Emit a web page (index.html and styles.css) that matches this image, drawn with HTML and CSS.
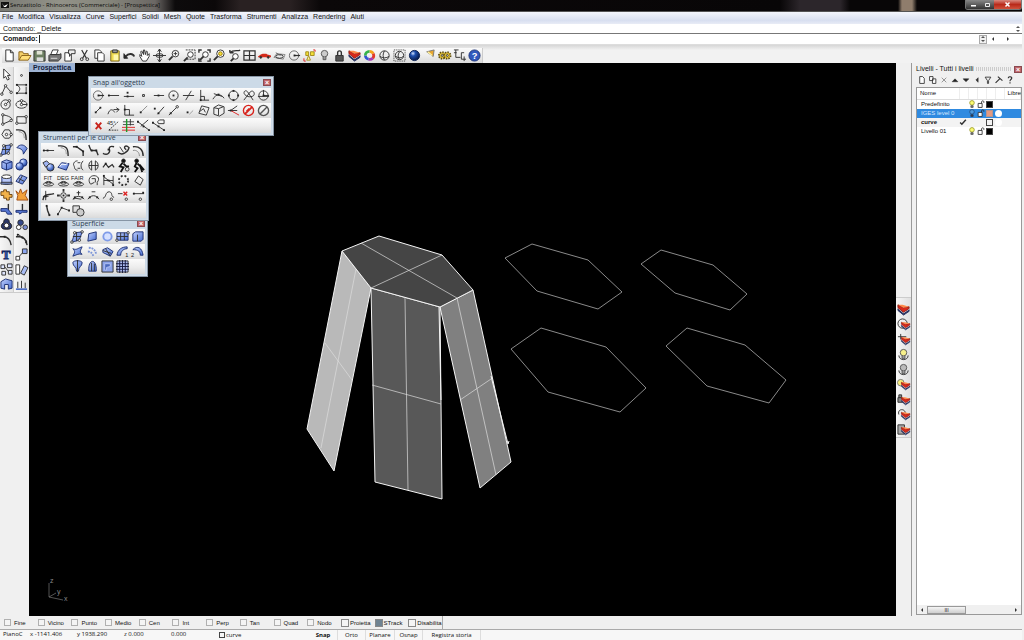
FILE: index.html
```
<!DOCTYPE html>
<html lang="it">
<head>
    <meta charset="UTF-8">
    <meta name="viewport" content="width=device-width, initial-scale=1.0">
    <title>Senzatitolo - Rhinoceros (Commerciale) - [Prospettica]</title>
    <link rel="stylesheet" href="styles.css">
</head>
<body>
    <svg class="defs" width="0" height="0" aria-hidden="true">
        <defs>
            <radialGradient id="blueBall" cx="35%" cy="30%" r="70%">
                <stop offset="0" stop-color="#dfe8ff"/><stop offset="0.5" stop-color="#6f8fe0"/><stop offset="1" stop-color="#24479f"/>
            </radialGradient>
            <radialGradient id="darkBall" cx="35%" cy="30%" r="70%">
                <stop offset="0" stop-color="#cfe0ff"/><stop offset="0.35" stop-color="#1d4fae"/><stop offset="1" stop-color="#061a4c"/>
            </radialGradient>
            <linearGradient id="blueFace" x1="0" y1="0" x2="1" y2="1">
                <stop offset="0" stop-color="#c4d3ff"/><stop offset="1" stop-color="#456bd0"/>
            </linearGradient>
        </defs>
    </svg>

    <header class="titlebar">
        <svg class="logo" viewBox="0 0 8 8"><path d="M0 1h8v6H0z" fill="#111"/><path d="M1 2l2 3 4-2-2 3H3z" fill="#fff"/></svg>
        <h1>Senzatitolo - Rhinoceros (Commerciale) - [Prospettica]</h1>
        <div class="window-buttons">
            <button aria-label="Riduci"><svg viewBox="0 0 9 7"><path d="M2 4h5v1.500H2z" fill="#fff"/></svg></button>
            <button aria-label="Ripristina"><svg viewBox="0 0 9 7"><path d="M2.500 2.500h4v3h-4z" fill="none" stroke="#eee"/></svg></button>
            <button class="close" aria-label="Chiudi"><svg viewBox="0 0 9 7"><path d="M2.500 1.500l4 4M6.500 1.500l-4 4" stroke="#fff" stroke-width="1.500"/></svg></button>
        </div>
    </header>

    <nav class="menu">
        <a href="#">File</a>
        <a href="#">Modifica</a>
        <a href="#">Visualizza</a>
        <a href="#">Curve</a>
        <a href="#">Superfici</a>
        <a href="#">Solidi</a>
        <a href="#">Mesh</a>
        <a href="#">Quote</a>
        <a href="#">Trasforma</a>
        <a href="#">Strumenti</a>
        <a href="#">Analizza</a>
        <a href="#">Rendering</a>
        <a href="#">Aiuti</a>
    </nav>

    <section class="command">
        <div class="history"><span>Comando: _Delete</span><span class="updown"></span></div>
        <div class="prompt">
            <label for="command">Comando:</label>
            <input type="text" id="command" autocomplete="off">
            <span class="updown boxed"></span>
            <span class="arrow left"></span>
            <span class="arrow right"></span>
        </div>
    </section>

    <div class="toolbar-row">
        <div class="tools main-tools" data-tools="new open save print props cut copy paste undo pan rotate zoom zoomWin zoomExt zoomSel undoView fourView car cplane osnapCircle selLight bulb lock layer wheel sphereWire sphereSel sphereBlue spot gears dims help"></div>
    </div>

    <main class="workspace">
        <aside class="left-tools">
            <div class="tools two-cols" data-tools="arrow point polyline curvePts circle ellipse arc rect polygon fillet srfPts srfArc box balls cylinder patch puzzle explode trim split union group curveEdit ptsEdit text move array orient boolBox align"></div>
        </aside>

        <section class="viewport">
            <h2>Prospettica</h2>
            <svg class="scene" viewBox="29 63 867 553" preserveAspectRatio="xMinYMin meet">
                <g class="solid">
                    <path d="M342 251L371 288L334 471L307 429z" fill="#b9b9b9"/>
                    <path d="M440 307L473 290L511 462L480 488z" fill="#808080"/>
                    <path d="M371 288L440 307L442 499L375 482z" fill="#585858"/>
                    <path d="M342 251L379 236L442 255L473 290L440 307L371 288z" fill="#454545"/>
                    <path d="M439 307L441 400M491 376L508 444L509 441"/>
                </g>
                <g class="iso">
                    <path d="M361 243L457 298L496 475M442 255L371 288"/>
                    <path d="M356 269L321 448M325 343L352 380"/>
                    <path d="M405 298L408 490M372 385L441 404"/>
                    <path d="M460 400L491 379"/>
                </g>
                <g class="outline">
                    <path d="M505 258L532 244L588 260L622 292L598 309L537 291z"/>
                    <path d="M641 264L661 250L713 265L747 294L730 310L675 293z"/>
                    <path d="M511 349L541 328L606 347L646 388L620 412L548 392z"/>
                    <path d="M666 346L687 328L745 345L786 380L769 403L707 386z"/>
                </g>
                <g class="axes">
                    <path d="M49 583V597L63 600M49 597L56 593"/>
                    <text x="50" y="583">z</text>
                    <text x="57" y="594">y</text>
                    <text x="64" y="601">x</text>
                </g>
            </svg>
        </section>

        <aside class="layer-tools">
            <div class="tools one-col" data-tools="layer layerLoop layerCurve bulbOn bulbOff layerBulb layerLock layerOpen layerCopy"></div>
        </aside>

        <aside class="layers">
            <div class="layers-title"><h2>Livelli - Tutti i livelli</h2><span class="grip"></span><button class="x" aria-label="Chiudi">×</button></div>
            <div class="tools small-tools" data-tools="pNew pCopy pDelete pUp pDown pLeft pFilter pHammer pHelp"></div>
            <div class="layer-list">
                <table>
                    <colgroup><col class="c-name"><col class="c-icon"><col class="c-icon"><col class="c-icon"><col class="c-icon"><col class="c-icon"><col></colgroup>
                    <thead>
                        <tr><th>Nome</th><th></th><th></th><th></th><th></th><th></th><th>Librer</th></tr>
                    </thead>
                    <tbody>
                        <tr><td>Predefinito</td><td></td><td data-icon="lamp"></td><td data-icon="padlock"></td><td><i class="swatch black"></i></td><td></td><td></td></tr>
                        <tr class="selected"><td>IGES level 0</td><td></td><td data-icon="lampDim"></td><td data-icon="padlock"></td><td><i class="swatch salmon"></i></td><td><i class="material"></i></td><td></td></tr>
                        <tr class="current"><td>curve</td><td data-icon="check"></td><td></td><td></td><td><i class="swatch"></i></td><td><i class="material"></i></td><td></td></tr>
                        <tr><td>Livello 01</td><td></td><td data-icon="lamp"></td><td data-icon="padlock"></td><td><i class="swatch black"></i></td><td></td><td></td></tr>
                    </tbody>
                </table>
                <div class="scrollbar"><span class="arrow left"></span><span class="thumb">III</span><span class="arrow right"></span></div>
            </div>
        </aside>

        <section class="palette surface">
            <div class="palette-title"><h2>Superficie</h2><button class="x" aria-label="Chiudi">×</button></div>
            <div class="tools" data-tools="srfPts srfPlane disc srfRect srfCyl loft drape network sweep1 sweep2 revolve rail heightfield srfGrid"></div>
        </section>
        <section class="palette curves">
            <div class="palette-title"><h2>Strumenti per le curve</h2><button class="x" aria-label="Chiudi">×</button></div>
            <div class="tools" data-tools="extend fillet chamfer connect blend loop offset project onSrf halves mirror wave runner runners fit deg fair head handle dotsRing diamond extract target archPlus archMinus bell removeKnot addKnot seam polyEdit boolCurve"></div>
        </section>
        <section class="palette snap">
            <div class="palette-title"><h2>Snap all'oggetto</h2><button class="x" aria-label="Chiudi">×</button></div>
            <div class="tools" data-tools="osnapCircle sEnd sNear sPoint sMid sCenter sInt sPerp sTan sQuad sKnot sVertex sFrom sAlong sBetween sLine sParallel sTanFrom sArc sOnSrf sOnMesh sSplit noRed noGrey sClear sAngle sGrid sCross sProject"></div>
        </section>
    </main>

    <form class="osnap">
        <label><input type="checkbox">Fine</label>
        <label><input type="checkbox">Vicino</label>
        <label><input type="checkbox">Punto</label>
        <label><input type="checkbox">Medio</label>
        <label><input type="checkbox">Cen</label>
        <label><input type="checkbox">Int</label>
        <label><input type="checkbox">Perp</label>
        <label><input type="checkbox">Tan</label>
        <label><input type="checkbox">Quad</label>
        <label><input type="checkbox">Nodo</label>
        <label class="big"><input type="checkbox">Proietta</label>
        <label class="big"><input type="checkbox" checked>STrack</label>
        <label class="big"><input type="checkbox">Disabilita</label>
    </form>

    <footer class="status">
        <span>PianoC</span>
        <span>x -1141.406</span>
        <span>y 1938.290</span>
        <span>z 0.000</span>
        <span>0.000</span>
        <span class="layer"><i class="swatch"></i>curve</span>
        <button class="on">Snap</button>
        <button>Orto</button>
        <button>Planare</button>
        <button>Osnap</button>
        <button>Registra storia</button>
    </footer>

    <script src="script.js"></script>
</body>
</html>
```
FILE: styles.css
```
* {
    box-sizing: border-box;
}
body {
    display: flex;
    flex-direction: column;
    height: 100vh;
    margin: 0;
    padding-right: 2px;
    overflow: hidden;
    font-family: "Open Sans", sans-serif;
    font-size: 6px;
    line-height: 10px;
    color: #111;
    background: #f0f0f0;
}
h1, h2 {
    margin: 0;
    font-size: inherit;
    font-weight: normal;
    white-space: nowrap;
}
button {
    padding: 0;
    border: none;
    background: none;
    font: inherit;
    color: inherit;
}
.defs {
    position: absolute;
}

/* Title bar */
.titlebar {
    display: flex;
    height: 12px;
    padding-left: 1px;
    background: linear-gradient(90deg, #7a7a74, #929288 60px, #84847a 110px, #6b6764 155px, #0d0b0c 175px, #0b0809 215px, #292122 240px, #292122 290px, #0b0809 320px, #080607 780px, #2c262b 800px, #2c262b 840px, #080607 850px, #080607 898px, #8f7d6c 902px, #8f7d6c 912px, #080607 917px);
    border-bottom: 1px solid #555;
}
.logo {
    width: 8px;
    height: 8px;
    margin: 1px 1px 0 0;
}
.titlebar h1 {
    flex: 1;
    color: #0c0c0c;
    line-height: 11px;
}
.window-buttons {
    display: flex;
    height: 10px;
    border: 1px solid #777;
    border-top: none;
    border-radius: 0 0 3px 3px;
    overflow: hidden;
}
.window-buttons button {
    display: flex;
    width: 14px;
    justify-content: center;
    background: linear-gradient(#888, #333);
}
.window-buttons svg {
    width: 9px;
    height: 7px;
    margin-top: 1px;
}
.window-buttons .close {
    width: 27px;
    background: linear-gradient(#d98a80, #b92a1a 50%, #d0523c);
}

/* Menu */
.menu {
    display: flex;
    gap: 5px;
    height: 12px;
    padding-left: 2px;
    font-family: "Liberation Sans", sans-serif;
    font-size: 7px;
    line-height: 10px;
    background: linear-gradient(#f4f6fc, #d8dff0 70%, #e8ecf6);
}
.menu a {
    color: #111;
    text-decoration: none;
}

/* Command line */
.command {
    font-family: "Liberation Sans", sans-serif;
    font-size: 7px;
    background: #fff;
    border-bottom: 1px solid #ddd;
}
.history, .prompt {
    display: flex;
    align-items: center;
    height: 10px;
    padding-left: 3px;
}
.history {
    justify-content: space-between;
    line-height: 9px;
    border-bottom: 1px solid #777;
}
.prompt label {
    font-weight: bold;
}
.prompt input {
    flex: 1;
    height: 8px;
    margin-left: 1px;
    padding: 0;
    border: none;
    border-left: 1px solid #222;
    outline: none;
    font: inherit;
}
.updown {
    display: flex;
    flex-direction: column;
    justify-content: center;
    gap: 2px;
    width: 8px;
    height: 9px;
    align-items: center;
}
.updown::before, .updown::after {
    content: "";
    border: 2px solid transparent;
    border-top: none;
    border-bottom-color: #555;
}
.updown::after {
    border-top: 2px solid #555;
    border-bottom: none;
}
.boxed {
    border: 1px solid #aaa;
    background: #f0f0f0;
}
.arrow {
    border: 2px solid transparent;
}
.arrow.left {
    border-right-color: #333;
    border-left: none;
}
.arrow.right {
    border-left-color: #333;
    border-right: none;
}
.prompt .arrow {
    margin-left: 5px;
}
.prompt .arrow.right {
    margin: 0 13px;
}

/* Tool buttons */
.tools {
    display: flex;
    flex-wrap: wrap;
}
.tools button {
    display: flex;
    align-items: center;
    justify-content: center;
    width: 15px;
    height: 15px;
}
.tools svg, td svg {
    display: block;
    width: 13px;
    height: 13px;
    overflow: visible;
    fill: none;
    stroke: #303030;
}
.tools svg text {
    font: 6px "Liberation Sans", sans-serif;
    fill: #222;
    stroke: none;
}
.tools .letter {
    font: bold 14px "Liberation Serif", serif;
    fill: #4468cc;
    stroke: #14265e;
    stroke-width: 1px;
}
.tools .mark {
    font: bold 10px "Liberation Sans", sans-serif;
    fill: #fff;
}
.toolbar-row {
    height: 18px;
    padding: 3px 0 0 2px;
    background: linear-gradient(#d6d6d6, #f2f2f2 5px);
}
.main-tools {
    width: max-content;
    flex-wrap: nowrap;
    border-right: 1px solid #ccc;
    background: linear-gradient(#fbfbfb, #ededed 50%, #dadada);
}

/* Workspace */
.workspace {
    position: relative;
    display: flex;
    flex: 1;
    min-height: 0;
}
.left-tools {
    width: 29px;
    padding-top: 4px;
    overflow: hidden;
}
.two-cols {
    width: 30px;
    margin-left: -1px;
    border-bottom: 1px solid #ccc;
    background: linear-gradient(90deg, #f8f8f8, #e2e2e2 14px, #f8f8f8 15px, #e2e2e2);
}
.two-cols button:nth-child(odd) {
    border-right: 1px solid #ccc;
}
.viewport {
    flex: 1;
    min-width: 0;
    overflow: hidden;
    background: #000;
}
.viewport h2 {
    width: max-content;
    padding: 0 4px;
    font: bold 7px/9px "Liberation Sans", sans-serif;
    color: #14223c;
    background: #9eb3d3;
}
.scene {
    display: block;
    width: 100%;
    margin-top: -9px;
}
.solid path {
    stroke: #f4f4f4;
}
.solid path:last-child {
    fill: none;
}
.iso path, .outline path {
    fill: none;
    stroke: #ddd;
    stroke-width: 0.7px;
}
.outline path {
    stroke: #c4c4c4;
}
.axes path {
    fill: none;
    stroke: #777;
    stroke-width: 0.7px;
}
.axes text {
    font: 7px "Liberation Sans", sans-serif;
    fill: #888;
}

/* Floating palettes lie over the viewport */
.palette {
    position: absolute;
    padding: 0 2px 2px;
    border: 1px solid #8795a5;
    background: #ccdae7;
    box-shadow: 0 0 1px #fff inset;
}
.palette-title {
    display: flex;
    align-items: center;
    justify-content: space-between;
    height: 11px;
    padding-left: 2px;
    color: #2c3c50;
    font-size: 7px;
}
.palette .tools {
    background: repeating-linear-gradient(#fbfbfb, #ededed 8px, #dadada 15px);
}
.snap {
    top: 13px;
    left: 88px;
    width: 186px;
}
.curves {
    top: 68px;
    left: 38px;
    width: 111px;
}
.surface {
    top: 154px;
    left: 67px;
    width: 81px;
}
.x {
    width: 8px;
    height: 7px;
    border: 1px solid #8b4a50;
    font: bold 7px/5px "Liberation Sans", sans-serif;
    color: #fff;
    background: #c06468;
}

/* Layer toolbar and panel */
.layer-tools {
    width: 15px;
    padding-top: 234px;
}
.layer-tools .tools {
    padding-top: 4px;
    border-top: 1px solid #ccc;
    border-bottom: 1px solid #ccc;
    background: linear-gradient(90deg, #f8f8f8, #dedede);
}
.layers {
    display: flex;
    flex-direction: column;
    width: 111px;
    padding-left: 4px;
    border-left: 1px solid #999;
    font-family: "Liberation Sans", sans-serif;
}
.layers-title {
    display: flex;
    align-items: center;
    gap: 2px;
    height: 11px;
    padding-top: 1px;
    font-size: 7px;
}
.grip {
    flex: 1;
    height: 4px;
    background: repeating-linear-gradient(90deg, #ccc 0 1px, transparent 1px 2px);
}
.small-tools {
    height: 13px;
}
.small-tools button {
    width: 11px;
    height: 11px;
}
.small-tools svg {
    width: 8px;
    height: 8px;
}
.layer-list {
    display: flex;
    flex: 1;
    flex-direction: column;
    justify-content: space-between;
    margin-bottom: 1px;
    border: 1px solid #999;
    background: #fff;
    overflow: hidden;
}
table {
    width: 100%;
    table-layout: fixed;
    border-collapse: collapse;
    line-height: 9px;
}
.c-name {
    width: 42px;
}
.c-icon {
    width: 9px;
}
th {
    height: 11px;
    padding: 0 0 0 3px;
    font-weight: normal;
    text-align: left;
    border-bottom: 1px solid #ddd;
    border-right: 1px solid #eee;
}
td {
    height: 9px;
    padding: 0;
    white-space: nowrap;
}
td:first-child {
    padding-left: 4px;
}
td svg {
    width: 8px;
    height: 8px;
}
.selected {
    color: #d8e8ff;
    background: #2f8ae0;
}
.current {
    font-weight: bold;
    background: #f3f3f3;
}
.swatch, .material {
    display: block;
    width: 7px;
    height: 7px;
    border: 1px solid #444;
}
.black {
    background: #000;
}
.salmon {
    border-color: #b7958c;
    background: #e59a80;
}
.material {
    border: none;
    border-radius: 50%;
    background: #fff;
}
.scrollbar {
    display: flex;
    align-items: center;
    gap: 4px;
    height: 9px;
    padding: 0 4px;
    background: #f0f0f0;
}
.thumb {
    width: 39px;
    height: 8px;
    border: 1px solid #999;
    font-size: 5px;
    line-height: 6px;
    text-align: center;
    background: linear-gradient(#f5f5f5, #cfcfcf);
}
.scrollbar .arrow.right {
    margin-left: auto;
}

/* Object snaps */
.osnap {
    display: grid;
    grid-template-columns: repeat(13, minmax(0, 1fr));
    width: 443px;
    height: 13px;
    padding-left: 4px;
    border-right: 1px solid #aaa;
    font-family: "Liberation Sans", sans-serif;
}
.osnap label {
    display: flex;
    align-items: center;
    gap: 3px;
    white-space: nowrap;
}
.osnap input {
    appearance: none;
    flex: none;
    width: 7px;
    height: 7px;
    margin: 0;
    border: 1px solid #b0b0b0;
    background: #f4f4f4;
}
.osnap .big {
    gap: 1px;
}
.osnap .big input {
    width: 8px;
    height: 8px;
    border-color: #888;
}
.osnap .big input:checked {
    background: #6f8392;
}

/* Status bar */
.status {
    display: grid;
    grid-template-columns: 27px 47px 47px 47px 48px 90px 29px 28px 29px 28px 58px;
    height: 11px;
    padding-left: 3px;
    line-height: 9px;
    border-top: 1px solid #aaa;
    background: #f7f7f7;
}
.status .layer {
    display: flex;
    align-items: center;
    gap: 1px;
}
.status .swatch {
    width: 6px;
    height: 6px;
}
.status button {
    border-right: 1px solid #ddd;
    white-space: nowrap;
}
.status .on {
    font-weight: bold;
}
```
FILE: script.js
```
// Shared pieces
const dot = (x, y) => `<path d="M${x - 1} ${y - 1}h2v2h-2z" fill="#222" stroke="none"/>`;
const node = (x, y) => `<circle cx="${x}" cy="${y}" r="1.300" fill="#fff"/>`;
const line = (d) => `<path d="${d}"/>`;
const blue = (d) => `<path d="${d}" fill="url(#blueFace)" stroke="#1c2f70"/>`;
const ball = (x, y, r) => `<circle cx="${x}" cy="${y}" r="${r}" fill="url(#blueBall)" stroke="#1c2f70"/>`;
const redLayer = '<path d="M1 6l6 5 6-4v2l-6 4-6-5z" fill="#26305e" stroke="#26305e"/><path d="M1 5l6 5 6-4v1l-6 4-6-5z" fill="#fff" stroke="none"/><path d="M1 2l6 3 6-1v2l-6 4-6-5z" fill="#d8281a" stroke="#8a2018"/><path d="M1 2l5 0 7 2-6 1z" fill="#ff8a4a" stroke="none"/>';
const miniLayer = `<g transform="translate(4 3) scale(.75)">${redLayer}</g>`;
const lampShape = (c) => `<circle cx="7" cy="5" r="3.500" fill="${c}" stroke="#555"/><path d="M5.500 8.500v3h3v-3" fill="#999" stroke="#555"/>`;
const rings = '<ellipse cx="7" cy="11" rx="5.500" ry="2"/><ellipse cx="7" cy="9.500" rx="3" ry="1.500"/>';

const icons = {
    // standard toolbar
    new: '<path d="M3 1h5l3 3v9H3zM8 1v3h3" fill="#fff"/>',
    open: '<path d="M1 12V3h4l1 2h5v2" fill="#f3cf6a" stroke="#886018"/><path d="M1 12l3-5h10l-3 5z" fill="#ffdf7a" stroke="#886018"/>',
    save: '<path d="M1 2h12v11H1z" fill="#6d8062"/><path d="M4 2h6v4H4z" fill="#dfe3d4" stroke="none"/><path d="M4 9h7v4H4z" fill="#ddd" stroke="none"/>',
    print: '<path d="M5 1h6L9 6H3z" fill="#fff"/><path d="M2 6h10l2-1v5l-3 3H1V7z" fill="#777"/><path d="M3 10h7" stroke="#ddd"/>',
    props: '<path d="M2 4h7v9H2z" fill="#fff"/><path d="M6 1h7v4H9L7 8V5H6z" fill="#eee"/>',
    cut: '<path d="M4 1l5 9M10 1L5 10" stroke-width="1.300"/><circle cx="4" cy="11" r="1.500"/><circle cx="10" cy="11" r="1.500"/>',
    copy: '<path d="M2 1h5l2 2v7H2z" fill="#fff"/><path d="M5 4h5l2 2v7H5z" fill="#fff"/>',
    paste: '<path d="M3 2h9v11H3z" fill="#f1dc50" stroke="#77651a"/><path d="M5 1h5v3H5z" fill="#999"/><path d="M6 6h5v6H6z" fill="#fff8ae" stroke="none"/>',
    undo: '<path d="M3 8c3-4 8-3 9 0" stroke-width="2"/><path d="M1 5v5h4z" fill="#222"/>',
    pan: '<path d="M5 13L2 8V6l2 2-1-5 1-1 2 4V1h1l1 5 1-4 1 1v4l2-2v3l-3 5z" fill="#fff"/>',
    rotate: '<path d="M7 0v14M0 7h14M5 3l2-3 2 3M5 11l2 3 2-3"/><ellipse cx="7" cy="7" rx="4" ry="2" />',
    zoom: '<circle cx="8" cy="5" r="3.500" fill="#fff"/><path d="M5 8l-4 4" stroke-width="2"/><path d="M6 5h4M8 3v4"/>',
    zoomWin: '<path d="M3 1h10v10H3" stroke-dasharray="2 1"/><circle cx="8" cy="6" r="3" fill="#fff"/><path d="M5 9l-4 4" stroke-width="2"/>',
    zoomExt: '<path d="M1 4V1h3M10 1h3v3M13 10v3h-3M4 13H1v-3" stroke-width="1.500"/><circle cx="8" cy="6" r="3" fill="#fff"/><path d="M6 8l-4 4" stroke-width="2"/>',
    zoomSel: '<circle cx="8" cy="5" r="4" fill="#fff"/><circle cx="8" cy="5" r="2" fill="#f4dc33" stroke="#997d10"/><path d="M5 8l-4 4" stroke-width="2"/>',
    undoView: '<path d="M2 4c4-4 9-1 11-3M2 4V1M2 4h4" stroke-width="1.500"/><circle cx="8" cy="8" r="3" fill="#fff"/><path d="M6 10l-3 3" stroke-width="2"/>',
    fourView: '<path d="M1 2h12v10H1zM7 2v10M1 7h12" stroke-width="1.300"/>',
    car: '<path d="M0 8l3-2 2-1h4l1 1 4 1v2H0z" fill="#d42a1a" stroke="none"/><circle cx="3" cy="9" r="1" fill="#333"/><circle cx="11" cy="9" r="1" fill="#333"/>',
    cplane: '<path d="M1 9l3-4 9 1-2 5z" stroke="#888"/><ellipse cx="7" cy="8" rx="4" ry="2"/><path d="M3 4l5 3" stroke="#666"/>',
    osnapCircle: '<circle cx="6.500" cy="7" r="5" stroke="#666"/><path d="M7 7h6" stroke-width="1.300"/>' + dot(7, 7),
    selLight: '<path d="M3 3h3v4H3zM8 3h4v4H8z" fill="#f3df36" stroke="#a08a1c"/><path d="M6 7l-2 5h4z" fill="#fff4a0" stroke="#a08a1c"/><path d="M11 1h2v2M1 10v3h2" stroke="#d22"/>',
    bulb: lampShape('#ccc'),
    lock: '<path d="M5 7V4a2 2 0 0 1 4 0v3" stroke-width="1.500"/><path d="M3 7h8v6H3z" fill="#555"/>',
    layer: redLayer,
    wheel: '<g stroke-width="3"><path d="M7 2.500A4.500 4.500 0 0 1 11 5" stroke="#f5a21c"/><path d="M11 5A4.500 4.500 0 0 1 10.500 10" stroke="#e23a2a"/><path d="M10.500 10A4.500 4.500 0 0 1 6 11" stroke="#a33bb5"/><path d="M6 11A4.500 4.500 0 0 1 2.500 7" stroke="#3154d1"/><path d="M2.500 7A4.500 4.500 0 0 1 7 2.500" stroke="#36b34a"/></g>',
    sphereWire: '<circle cx="7" cy="7" r="5" fill="#eee"/><path d="M7 2c-2 3-2 7 0 10M2 8c3 2 7 2 10 0"/>',
    sphereSel: '<path d="M1 1h12v12H1z" stroke-dasharray="1 1"/><circle cx="7" cy="7" r="4.500" fill="#eee"/><path d="M7 3c-2 3-2 6 0 8M3 8c3 2 6 2 8 0"/>',
    sphereBlue: '<circle cx="7" cy="7" r="5.500" fill="url(#darkBall)" stroke="#0a1f52"/>',
    spot: '<path d="M4 3l8-2-1 7z" fill="#e9a630" stroke="#777"/><path d="M5 3l5 4" stroke="#fff3a0" stroke-width="1.500"/>',
    gears: '<circle cx="4.500" cy="7" r="3.500" fill="#e8c63a" stroke="#5d4c10" stroke-width="2" stroke-dasharray="1.500 1.200"/><circle cx="10" cy="7" r="3.500" fill="#e8c63a" stroke="#5d4c10" stroke-width="2" stroke-dasharray="1.500 1.200"/><circle cx="4.500" cy="7" r="1" fill="#fff"/><circle cx="10" cy="7" r="1" fill="#fff"/>',
    dims: '<path d="M1 1h5M3 1v8h5M9 4v7h5M9 4h3M12 8v5M1 4h3"/>',
    help: '<circle cx="7" cy="7" r="6" fill="#3158bd" stroke="#1e3477"/><text x="4" y="11" class="mark">?</text>',
    // side toolbar
    arrow: '<path d="M4 1v10l2-2 2 4 2-1-2-4h3z" fill="#fff"/>',
    point: '<circle cx="7" cy="8" r="1"/>',
    polyline: line('M2 12L6 3l6 7') + node(2, 12) + node(6, 3) + node(12, 10),
    curvePts: line('M2 2h9M2 2c6 4 2 7 0 9h10V4') + dot(2, 2) + dot(12, 2) + dot(2, 11) + dot(12, 11),
    circle: '<circle cx="6" cy="7" r="5"/><path d="M6 7l4-4"/>' + node(6, 7) + node(10, 3),
    ellipse: '<ellipse cx="7" cy="7" rx="6" ry="4"/><path d="M7 3v4h6"/>' + node(7, 7) + node(7, 3),
    arc: line('M3 2c8 1 12 5 9 6M12 8L3 12V2') + node(3, 2) + node(3, 12) + node(12, 8),
    rect: line('M2 4h10v7H2z') + node(2, 11) + node(12, 4),
    polygon: line('M5 2h5l3 5-3 4H5L2 7z') + node(7, 7) + node(12, 7),
    fillet: '<path d="M1 2h3c6 0 8 3 8 11" stroke-width="1.500"/><path d="M4 4c4 0 6 3 6 7" stroke="#999"/>',
    srfPts: blue('M4 3l8-1-3 9-8 2z') + line('M6 2v10M2 7h9') + node(4, 3) + node(12, 2) + node(9, 11) + node(1, 13),
    srfArc: blue('M2 5c3-4 8-4 11 1l-4 6C9 8 7 6 2 5z'),
    box: blue('M2 4l5-2 6 2v7l-6 2-5-2z') + '<path d="M2 4l5 2 6-2M7 6v7" stroke="#1c2f70"/>',
    balls: ball(9, 5, 4) + ball(5, 9, 4),
    cylinder: '<path d="M2 4v6c0 3 10 3 10 0V4" fill="#b8c8fb" stroke="#1c2f70"/><ellipse cx="7" cy="4" rx="5" ry="2" fill="#fff"/><path d="M1 10h12v2H1z" fill="#86a2ea"/>',
    patch: blue('M1 9l5-7 7 3-5 7z') + line('M4 6l6 3M8 3L4 10'),
    puzzle: '<path d="M1 4h3V2h3v2h3v3h3v3h-3v3H7v-2H4V8H1z" fill="#f2b24a" stroke="#6b4312"/>',
    explode: '<path d="M1 3l3 3 2-5 2 5 5-4-2 6 3 5H2l1-5z" fill="#f2a13a" stroke="#a14e12"/>',
    trim: '<path d="M9 1v10" stroke-width="1.500"/><path d="M1 6h7l5 6H8L6 9H1z" fill="#5576d2" stroke="#1c2f70"/>',
    split: '<path d="M8 1v7" stroke-width="1.500"/><path d="M1 8h12v2H8l-3 2-1-2H1z" fill="#5576d2" stroke="#1c2f70"/>',
    union: '<path d="M7 1c3 0 3 3 3 4 4 2 3 7-1 7H5C1 12 0 7 4 5c0-1 0-4 3-4z" fill="#2a3768" stroke="#111"/><circle cx="7" cy="8" r="2.500" fill="#fff"/>',
    group: '<circle cx="6" cy="5" r="3" fill="#34488c"/><circle cx="4" cy="10" r="2.500" fill="#fff"/><circle cx="11" cy="10" r="2.500" fill="#7d90d6"/>',
    curveEdit: '<path d="M0 4h4c5 0 7 3 8 9" stroke-width="1.500"/>' + dot(5, 4),
    ptsEdit: '<path d="M1 4h4c5 0 7 3 8 9" stroke-width="1.500"/><path d="M3 1l10 8"/>' + dot(3, 2) + dot(8, 5) + dot(12, 10),
    text: '<text x="2" y="12" class="letter">T</text>',
    move: '<path d="M2 12l8-9"/><path d="M8 1h5v5H8z" fill="#8ba5ef"/><path d="M1 9h4v4H1z" fill="#fff"/>',
    array: '<path d="M1 2h4v4H1zM8 1h5v4H8zM2 9h4v4H2zM9 8h4v4H9z" fill="#dfe6ff"/><path d="M5 4l4 5"/>',
    orient: '<path d="M1 2h4v10H1z" fill="#fff"/><path d="M6 11l4-8 4 2-4 8z" fill="#a9bdf5"/>',
    boolBox: blue('M1 4l5-3 7 2v8l-4 1V7H5v5l-4-1z'),
    align: line('M3 4v7M7 3v8M11 5v6') + '<path d="M1 12h12" stroke="#3158bd" stroke-width="1.500"/>',
    // layer toolbar
    layerLoop: '<circle cx="6" cy="6" r="5"/>' + miniLayer,
    layerCurve: '<path d="M1 4h9M4 1v6"/>' + miniLayer,
    bulbOn: '<path d="M2 8c0 6 10 6 10 0" fill="#ddd"/>' + lampShape('#f7f08a'),
    bulbOff: '<path d="M2 8c0 6 10 6 10 0" fill="#ddd"/>' + lampShape('#bbb'),
    layerBulb: '<circle cx="4" cy="5" r="3.500" fill="#f7ee7a" stroke="#777"/>' + miniLayer,
    layerLock: '<path d="M1 5h5v5H1zM2 5V2h3v3" fill="#888"/>' + miniLayer,
    layerOpen: '<path d="M2 7C0 1 8 0 9 5"/>' + miniLayer,
    layerCopy: '<path d="M1 2h7v10H1z" fill="#aaa"/>' + miniLayer,
    // surface palette
    srfPlane: blue('M3 4l8-2v8l-9 2z'),
    disc: '<circle cx="7" cy="7" r="4.500" fill="#d5e0ff" stroke="#7f9be8" stroke-width="2"/>',
    srfRect: blue('M1 3h12v8H1z') + line('M5 3v8M9 3v8M1 7h12') + node(1, 11) + node(13, 3),
    srfCyl: blue('M2 4l3-2h8v8l-2 2H2z') + line('M7 5v7'),
    loft: blue('M2 4c4 2 6-1 10-2-2 4-3 6 0 8-5-1-6 1-10 2 2-4 3-5 0-8z'),
    drape: '<path d="M3 3c4 0 7 2 8 7M2 7c3 0 5 2 6 5" stroke="#7d95d8" stroke-width="2" stroke-dasharray="2 1"/>',
    network: blue('M2 5l5-2 6 4-3 5-8-4z') + line('M5 4l5 8M2 6l9 3'),
    sweep1: blue('M1 11C2 5 6 2 12 2v2C8 4 5 7 5 11z') + '<text x="10" y="13">1</text>',
    sweep2: blue('M2 5c5-5 10-2 11 6h-3C10 7 8 5 2 5z') + '<text x="0" y="13">2</text>',
    revolve: blue('M2 3c0-3 10-3 10 0 0 4-4 4-4 9H6C6 7 2 7 2 3z') + line('M7 0v13'),
    rail: blue('M3 12c-1-14 9-14 8 0z') + line('M6 3v9M9 4v8'),
    heightfield: '<path d="M1 1h12v12H1z" fill="#8ca3ea"/><path d="M4 4h6v3l-4 1v3H4z" fill="#4c69bd" stroke="#b4c4f4"/>',
    srfGrid: '<path d="M1 1h12v12H1z" fill="#aebcf2"/><path d="M4 0v14M7 0v14M10 0v14M0 4h14M0 7h14M0 10h14" stroke="#14183c"/>',
    // curve palette
    extend: line('M1 7h12') + dot(2, 7) + dot(6, 7),
    chamfer: '<path d="M1 3h4l7 5v5" stroke-width="1.500"/>' + dot(5, 3) + dot(12, 8),
    connect: '<path d="M2 1c1 3 2 6 3 6h5l2 5" stroke-width="1.500"/>' + dot(5, 7) + dot(10, 7),
    blend: '<path d="M1 10c5 3 8-1 7-4s1-4 5-3" stroke-width="1.500"/>' + dot(7, 6),
    loop: '<path d="M1 9c4 4 11 0 12-5-4-4-7 0-3 2" stroke-width="1.500"/><path d="M3 3l4 6"/>',
    offset: '<path d="M1 3c7-1 11 3 11 10" stroke-width="1.500"/><path d="M1 7c4-1 7 2 7 6" stroke="#888"/>',
    project: '<circle cx="9" cy="9" r="4" fill="url(#blueBall)"/><path d="M1 4l4-2 3 3-4 4z" fill="#9fb4f2"/>',
    onSrf: blue('M1 9l4-5 8 1-3 7z') + '<path d="M3 8c3-6 6 2 9-5" stroke="#fff"/>',
    halves: line('M6 2C2 2 1 6 2 7s0 5 4 5M6 4h3M6 10h3M12 2c-3 3-3 8 0 10'),
    mirror: line('M5 2C1 4 1 10 5 12M9 2c4 2 4 8 0 10M5 2v10M9 2v10M2 7h10'),
    wave: '<path d="M1 9l3-4 3 4 4-3 2 3" stroke-width="1.300"/>' + dot(4, 5),
    runner: '<circle cx="7" cy="2" r="2" fill="#111"/><path d="M6 4L3 8l4 1-3 5M7 5l3 3h3" stroke="#111" stroke-width="2"/><circle cx="11" cy="11" r="2"/>',
    runners: '<circle cx="5" cy="2" r="2" fill="#111"/><path d="M5 4L3 8l3 2-3 4M6 5l3 3 2 6M8 6l5 6" stroke="#111" stroke-width="2"/>',
    fit: '<text x="2" y="6">FIT</text>' + rings,
    deg: '<text x="0" y="6">DEG</text>' + rings,
    fair: '<text x="-1" y="6">FAIR</text>' + rings,
    head: '<path d="M11 12V9c4-5-1-8-5-7S1 8 4 11l4-2"/><path d="M5 5h4v4"/>',
    handle: line('M2 2v10M12 2v10M2 7h10M2 3l10 8') + dot(2, 2) + dot(12, 12) + dot(7, 7),
    dotsRing: '<circle cx="7" cy="7" r="5" stroke-width="2" stroke-dasharray="2 2"/>',
    diamond: line('M7 2l5 4-3 6-6-4z'),
    extract: '<path d="M1 12c1-7 4-5 12-7" stroke-width="1.500"/><path d="M4 2v10M1 8h6"/>' + dot(4, 8),
    target: '<circle cx="7" cy="7" r="3"/><path d="M7 0v3M7 11v3M0 7h3M11 7h3" stroke-width="2"/>' + dot(7, 7),
    archPlus: line('M1 11c3-4 9-4 12 0M7 2v5M5 4h4M1 11l3-1 6 1') + dot(3, 9) + dot(11, 9),
    archMinus: line('M1 11c3-5 9-5 12 0M5 3h4') + dot(3, 9) + dot(11, 9),
    bell: line('M1 10c4-1 2-7 7-7 4 1 1 5 5 6') + node(10, 11),
    removeKnot: '<path d="M1 5h5"/><path d="M7 3l4 4M11 3L7 7" stroke="#d22" stroke-width="1.500"/>' + node(10, 11),
    addKnot: line('M1 5h12') + dot(2, 5) + dot(12, 4) + node(9, 11),
    seam: '<path d="M5 2l1 5 2 5" stroke-width="1.500"/>' + dot(5, 2) + dot(8, 12),
    polyEdit: line('M1 11l4-7 8 3') + dot(1, 11) + dot(5, 4) + dot(13, 7),
    boolCurve: '<path d="M1 2h7v7H1z" fill="#ddd"/><circle cx="9" cy="9" r="4" fill="#ccc"/>',
    // snap palette
    sEnd: line('M2 7h11') + dot(2, 7),
    sNear: line('M2 8h11') + dot(6, 4) + dot(6, 8),
    sPoint: '<path d="M6 6h2v2H6z"/>',
    sMid: line('M2 7h11') + dot(7, 7),
    sCenter: '<circle cx="7" cy="7" r="5"/>' + dot(7, 7),
    sInt: line('M1 7h12M10 2L4 12'),
    sPerp: line('M4 1v11h9M4 8h4v4') + dot(4, 12),
    sTan: line('M1 11c3-6 9-6 12-1M2 5l9 3') + dot(7, 6),
    sQuad: '<circle cx="7" cy="7" r="5"/>' + dot(7, 2) + dot(7, 12) + dot(2, 7) + dot(12, 7),
    sKnot: line('M2 12L9 3c4-3 6 4 2 5S5 8 3 6s0-6 3-3l6 9'),
    sVertex: '<circle cx="7" cy="7" r="5"/><path d="M7 1v6h6M1 8h12"/>' + dot(7, 7),
    sFrom: line('M4 9l5-5') + dot(4, 9) + dot(9, 4),
    sAlong: line('M1 11c2-7 6-5 7-2M7 6h6M10 4l3 2-3 3'),
    sBetween: line('M3 1v11h10M3 6h5v6') + dot(3, 6),
    sLine: '<path d="M4 9l7-7" stroke="#888"/>' + dot(4, 9),
    sParallel: line('M6 11l7-8') + dot(3, 5) + dot(7, 10),
    sTanFrom: line('M2 12l8-8') + node(11, 3) + dot(4, 10),
    sArc: '<path d="M8 11l4-4" stroke="#999"/>' + dot(6, 9),
    sOnSrf: '<path d="M5 2l8 2-3 8-8-2z" fill="#eee"/><path d="M3 8l4-3 2 4"/>',
    sOnMesh: '<path d="M2 4l5-3 6 2v7l-5 3-6-2z" fill="#eee"/><path d="M2 4l5 1v7M7 5l5-2"/>',
    sSplit: '<path d="M1 7h10M4 7l7-5"/><path d="M4 7l9 5" stroke="#d22"/>' + dot(4, 7),
    noRed: '<circle cx="7" cy="7" r="5.500" stroke="#d8231c" stroke-width="1.500"/><path d="M3 11l8-8M5 8l3-3" stroke="#d8231c" stroke-width="2"/>',
    noGrey: '<circle cx="7" cy="7" r="5.500" stroke="#555" stroke-width="1.500"/><path d="M3 11l8-8" stroke="#555" stroke-width="1.500"/>',
    sClear: '<path d="M4 4l6 7M10 4l-6 7" stroke="#c8231c" stroke-width="2"/>',
    sAngle: '<path d="M2 12L12 3M2 12h10" stroke-dasharray="2 1"/><text x="0" y="6">45°</text>',
    sGrid: '<path d="M1 3h12M1 6h12" stroke="#444"/><path d="M0 9h14M0 12h14" stroke="#d22"/><path d="M5 0v14" stroke="#1b9a2a" stroke-width="1.500"/><path d="M9 0v7" />',
    sCross: line('M1 3l12 9M4 8l8-7') + dot(7, 8) + dot(1, 3) + dot(13, 12),
    sProject: line('M1 4l12 8M6 3l2-2h5v4H7z') + dot(1, 4) + dot(7, 8) + dot(13, 12),
    // layer panel
    pNew: '<path d="M3 1h5l3 3v9H3z" fill="#fff" stroke-width="1.500"/>',
    pCopy: '<path d="M1 1h6v7H1zM6 5h6v8H6z" fill="#fff" stroke-width="1.500"/>',
    pDelete: '<path d="M3 3l8 8M11 3l-8 8" stroke="#888" stroke-width="1.500"/>',
    pUp: '<path d="M7 5l5 5H2z" fill="#222"/>',
    pDown: '<path d="M7 10l5-5H2z" fill="#222"/>',
    pLeft: '<path d="M5 7l4-4v8z" fill="#333"/>',
    pFilter: '<path d="M2 2h10L8 8v5H6V8z" stroke-width="1.500"/>',
    pHammer: '<path d="M1 12l8-8M5 1l8 7" stroke-width="2"/>',
    pHelp: '<path d="M4 4c0-4 7-3 6 0S7 6 7 9M7 11v2" stroke-width="2"/>',
    lamp: '<circle cx="7" cy="5" r="4" fill="#fbfb70" stroke="#9a9a30" stroke-width="1.500"/><path d="M5 10h4v3H5z" fill="#888"/>',
    lampDim: '<circle cx="7" cy="5" r="4" fill="#4f9bdc" stroke="#1f4f86" stroke-width="1.500"/><path d="M5 10h4v3H5z" fill="#346"/>',
    padlock: '<path d="M2 6h7v7H2z" fill="#fff" stroke-width="1.500"/><path d="M8 6V3c0-2 4-2 4 0v2" stroke-width="1.500"/>',
    check: '<path d="M2 8l3 3 7-8" stroke-width="2.500"/>'
};

const draw = (name) => `<svg viewBox="0 0 14 14" aria-hidden="true">${icons[name]}</svg>`;

document.querySelectorAll('[data-tools]').forEach(bar => {
    bar.dataset.tools.split(' ').forEach(name => {
        const button = document.createElement('button');
        button.type = 'button';
        button.setAttribute('aria-label', name);
        button.innerHTML = draw(name);
        bar.appendChild(button);
    });
});

document.querySelectorAll('[data-icon]').forEach(cell => {
    cell.innerHTML = draw(cell.dataset.icon);
});
```
